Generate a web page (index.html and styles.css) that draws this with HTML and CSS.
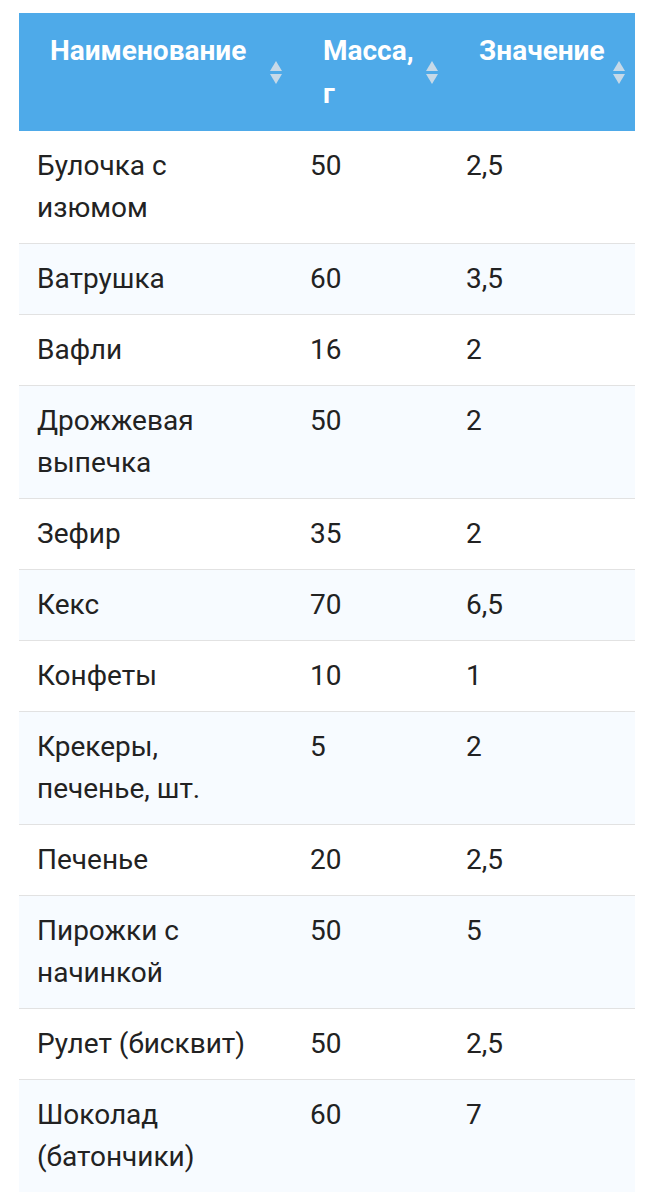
FILE: index.html
```html
<!DOCTYPE html>
<html lang="ru">
<head>
<meta charset="utf-8">
<link rel="stylesheet" href="styles.css">
</head>
<body>
<div class="wrap">
<table class="tbl">
  <colgroup>
    <col class="c1"><col class="c2"><col class="c3">
  </colgroup>
  <thead>
    <tr>
      <th>Наименование<span class="sort"></span></th>
      <th>Масса, г<span class="sort"></span></th>
      <th>Значение<span class="sort"></span></th>
    </tr>
  </thead>
  <tbody>
    <tr><td>Булочка с изюмом</td><td>50</td><td>2,5</td></tr>
    <tr><td>Ватрушка</td><td>60</td><td>3,5</td></tr>
    <tr><td>Вафли</td><td>16</td><td>2</td></tr>
    <tr><td>Дрожжевая выпечка</td><td>50</td><td>2</td></tr>
    <tr><td>Зефир</td><td>35</td><td>2</td></tr>
    <tr><td>Кекс</td><td>70</td><td>6,5</td></tr>
    <tr><td>Конфеты</td><td>10</td><td>1</td></tr>
    <tr><td>Крекеры, печенье, шт.</td><td>5</td><td>2</td></tr>
    <tr><td>Печенье</td><td>20</td><td>2,5</td></tr>
    <tr><td>Пирожки с начинкой</td><td>50</td><td>5</td></tr>
    <tr><td>Рулет (бисквит)</td><td>50</td><td>2,5</td></tr>
    <tr><td>Шоколад (батончики)</td><td>60</td><td>7</td></tr>
  </tbody>
</table>
</div>
</body>
</html>
```

FILE: styles.css
```css
html, body {
  margin: 0;
  padding: 0;
  background: #ffffff;
}
body {
  font-family: Roboto, "Noto Sans", Arial, sans-serif;
  color: #222222;
}
.wrap {
  padding: 13px 19px 0 19px;
}
.tbl {
  width: 616px;
  border-collapse: collapse;
  table-layout: fixed;
}
.c1 { width: 273px; }
.c2 { width: 156px; }
.c3 { width: 187px; }
.tbl th {
  position: relative;
  background: #4eaae9;
  color: #ffffff;
  font-weight: 700;
  font-size: 28px;
  line-height: 43px;
  text-align: left;
  vertical-align: top;
  padding: 16px 30px 16px 31px;
}
.sort {
  position: absolute;
  right: 10px;
  top: 50%;
  width: 12px;
  height: 23px;
  margin-top: -11px;
}
.sort::before,
.sort::after {
  content: "";
  position: absolute;
  left: 0;
  width: 0;
  height: 0;
  border-left: 6px solid transparent;
  border-right: 6px solid transparent;
}
.sort::before {
  top: 0;
  border-bottom: 10px solid rgba(220, 226, 232, 0.85);
}
.sort::after {
  bottom: 0;
  border-top: 10px solid rgba(220, 226, 232, 0.85);
}
.tbl td {
  font-size: 28px;
  line-height: 42px;
  padding: 14px 18px 14px 18px;
  vertical-align: top;
  border-bottom: 1px solid #e2e2e2;
}
.tbl tbody tr:nth-child(even) td {
  background: #f7fbff;
}
.tbl tbody tr:last-child td {
  border-bottom: none;
}
```
